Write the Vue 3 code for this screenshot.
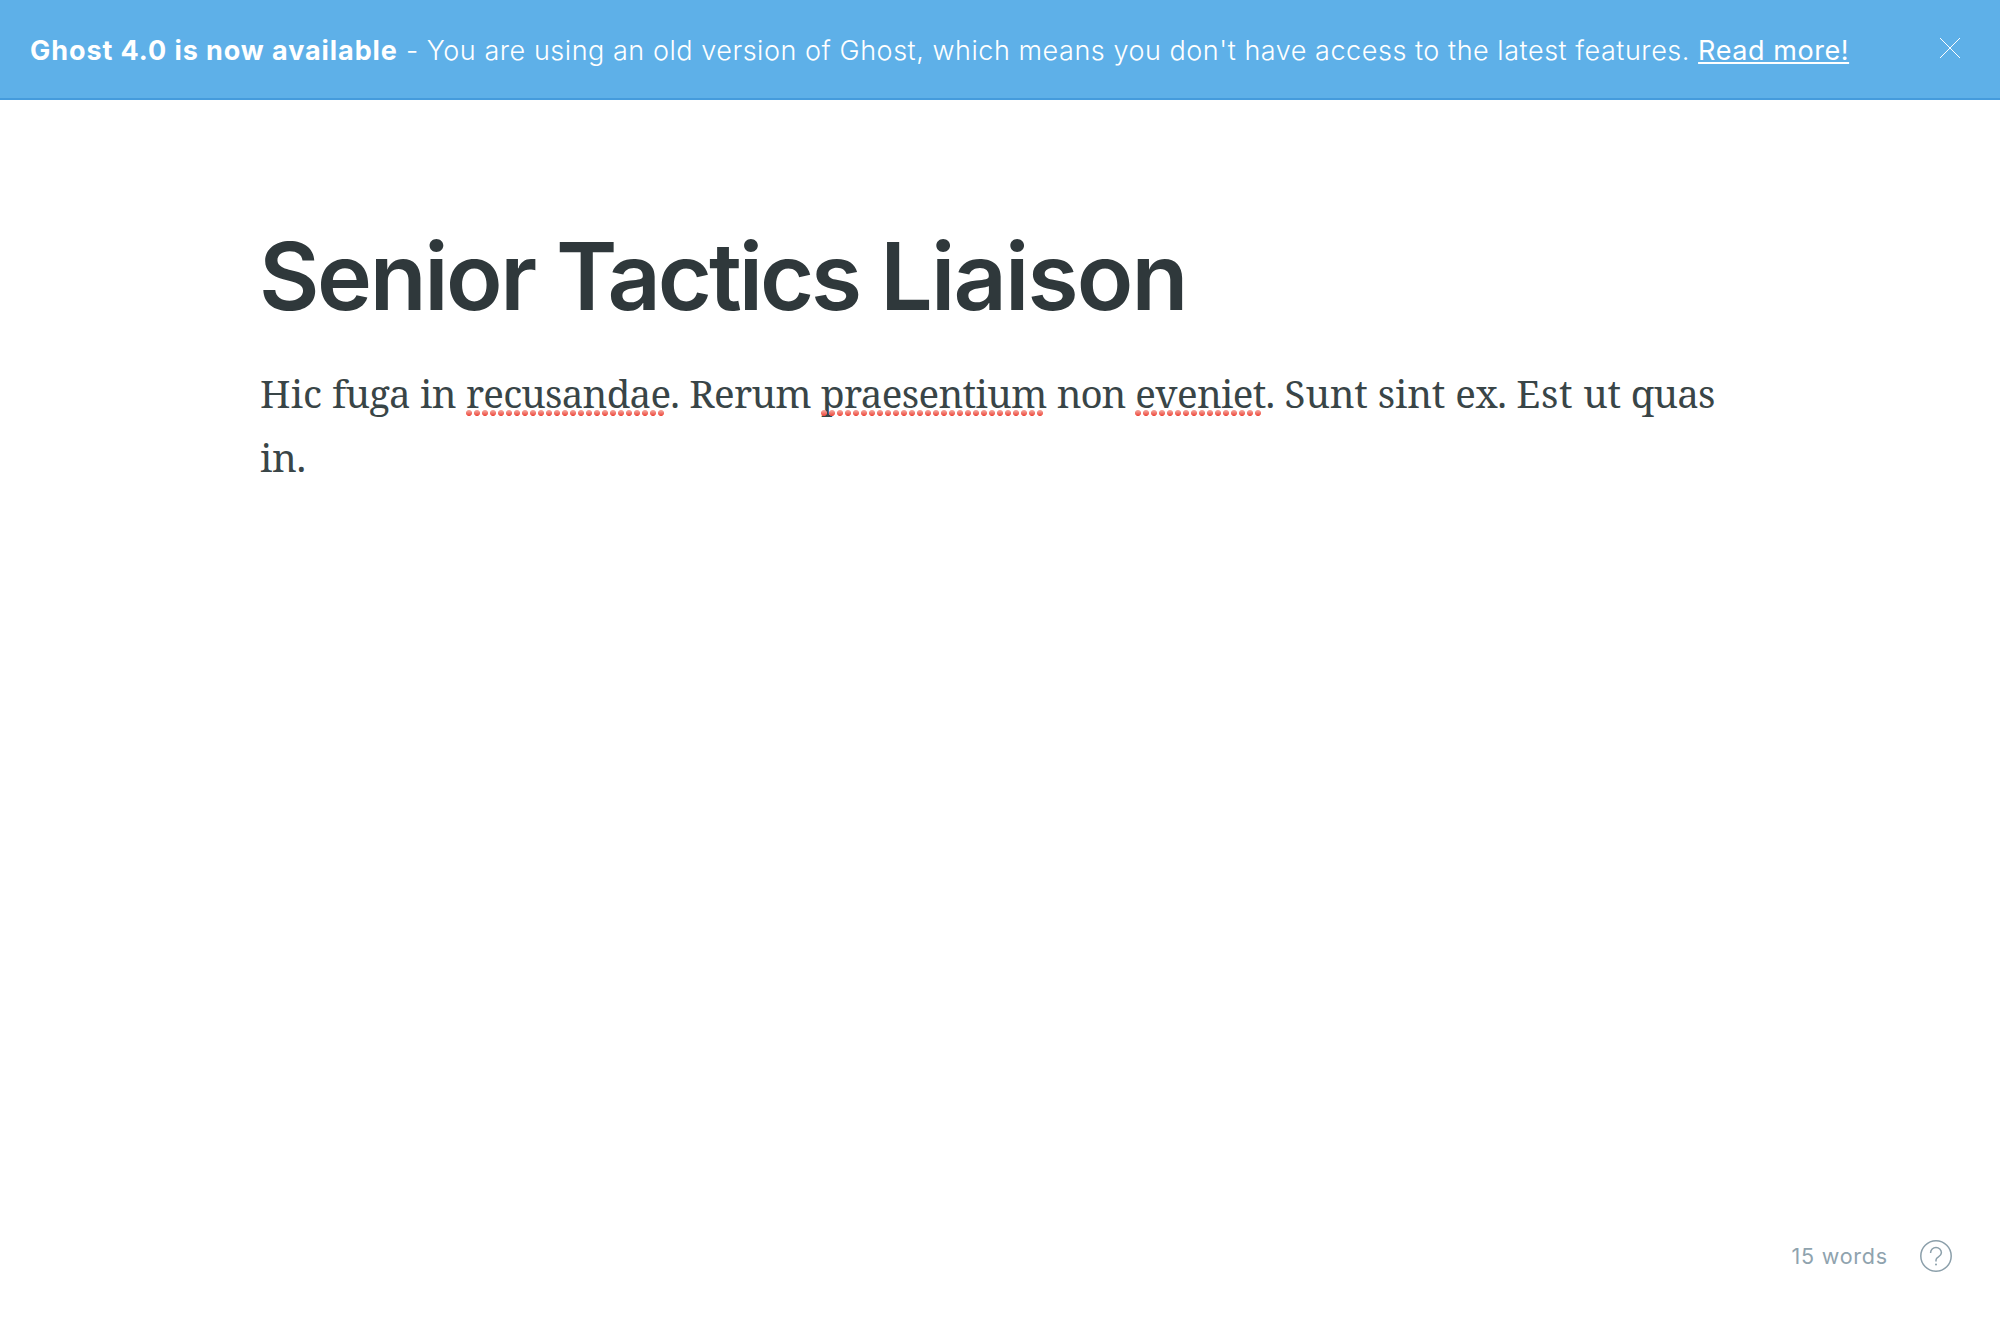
<script setup>
// tracking is in px; dots is the number of spell-check dots under a word
const words = [
  { text: 'Hic', tracking: 0.1 },
  { text: 'fuga', tracking: -0.8 },
  { text: 'in', tracking: -0.6 },
  { text: 'recusandae', end: '.', tracking: -0.75, dots: 25 },
  { text: 'Rerum', tracking: -0.6 },
  { text: 'praesentium', tracking: -0.65, dots: 28 },
  { text: 'non', tracking: -1.1 },
  { text: 'eveniet', end: '.', tracking: -0.65, dots: 16 },
  { text: 'Sunt', tracking: -0.15 },
  { text: 'sint', tracking: -0.15 },
  { text: 'ex', end: '.', tracking: -0.5 },
  { text: 'Est', tracking: 0.7 },
  { text: 'ut', tracking: -0.25 },
  { text: 'quas', tracking: -0.9 },
  { text: 'in', end: '.', tracking: -0.3 },
]
</script>

<template>
  <div class="editor">
    <header class="notice">
      <p class="notice-text">
        <b>Ghost 4.0 is now available</b><span class="notice-body"> - You are using an old version of Ghost, which means you don't have access to the latest features. </span><a class="notice-link">Read more!</a>
      </p>
      <button class="close" aria-label="Close">
        <svg width="20" height="20" viewBox="0 0 20 20">
          <path d="M0 0L20 20M20 0L0 20" fill="none" stroke="#fff" stroke-width="1" />
        </svg>
      </button>
    </header>

    <main class="post">
      <h1 class="title">Senior <span class="tight">Tactics</span> <span class="loose">Liaison</span></h1>
      <p class="copy">
        <template v-for="(word, i) in words" :key="i">
          <span :style="{ letterSpacing: word.tracking + 'px' }"><span class="word">{{ word.text }}<i v-if="word.dots" class="dots" :style="{ width: word.dots * 8 - 2 + 'px' }"></i></span>{{ word.end }}</span>{{ ' ' }}
        </template>
      </p>
    </main>

    <footer class="status">
      <span class="count">15 words</span>
      <svg class="help" width="34" height="34" viewBox="0 0 34 34" fill="none" stroke="#8b9faa" stroke-width="1.5">
        <circle cx="17" cy="17" r="15.2" />
        <path d="M11.6 14v-.2a5.4 5.4 0 0 1 10.8 0c0 4.2-5.4 3.8-5.4 7.2v1.4" />
        <circle cx="17" cy="25.4" r="1" fill="#8b9faa" stroke="none" />
      </svg>
    </footer>
  </div>
</template>

<style>
body {
  background: #fff;
}
</style>

<style scoped>
.editor {
  display: flex;
  flex-direction: column;
  height: 1320px;
  font-family: Inter, sans-serif;
}
.notice {
  box-sizing: border-box;
  height: 100px;
  display: flex;
  align-items: center;
  justify-content: space-between;
  padding: 0 40px 0 30px;
  background: #5eb0e8;
  border-bottom: 2px solid #459bdc;
  color: #fff;
}
.notice-text {
  margin: 3px 0 0;
  font-size: 27px;
  line-height: 34px;
  white-space: nowrap;
}
.notice-text b {
  font-weight: 700;
  letter-spacing: 0.92px;
}
.notice-body {
  font-weight: 300;
  letter-spacing: 0.535px;
}
.notice-link {
  letter-spacing: 0.57px;
  text-decoration: underline;
  text-decoration-thickness: 2px;
  text-underline-offset: 2px;
}
.close {
  margin: 0 0 2px;
  padding: 0;
  border: 0;
  background: none;
  line-height: 0;
}
.close svg {
  overflow: visible;
}
.post {
  flex: 1;
  padding: 120px 260px 0;
}
.title {
  margin: 0 0 0 -1px;
  font-size: 93px;
  line-height: 112px;
  font-weight: 600;
  letter-spacing: -2.4px;
  color: #2f383b;
}
.tight {
  letter-spacing: -3.05px;
}
.loose {
  letter-spacing: -1.85px;
}
.copy {
  margin: 29px 0 0;
  font: 38.5px/64px 'Noto Serif', 'Liberation Serif', serif;
  color: #394547;
}
.word {
  position: relative;
}
.dots {
  position: absolute;
  left: 0;
  top: 43px;
  height: 6px;
  background: linear-gradient(#f5aca4, #ee4639);
  mask: radial-gradient(circle at 3px 3px, #000 2.7px, transparent 3.3px) 0 0 / 8px 6px repeat-x;
}
.status {
  display: flex;
  justify-content: flex-end;
  align-items: center;
  padding: 0 47px 47px;
}
.count {
  font-size: 21.5px;
  letter-spacing: 0.8px;
  color: #8fa3ae;
  margin-right: 31px;
}
</style>
